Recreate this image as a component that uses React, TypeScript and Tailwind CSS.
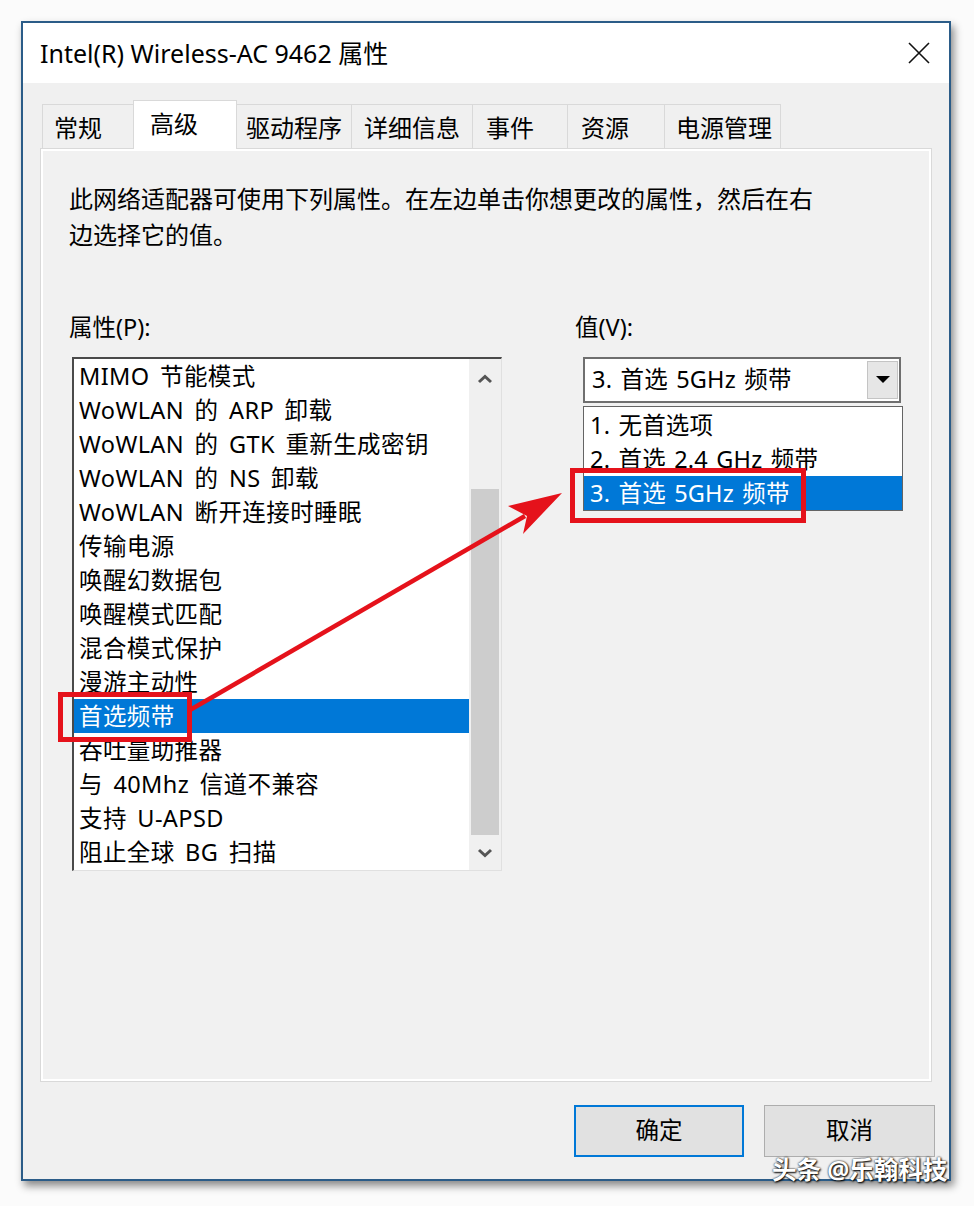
import React from "react";

const items = [
  "MIMO 节能模式",
  "WoWLAN 的 ARP 卸载",
  "WoWLAN 的 GTK 重新生成密钥",
  "WoWLAN 的 NS 卸载",
  "WoWLAN 断开连接时睡眠",
  "传输电源",
  "唤醒幻数据包",
  "唤醒模式匹配",
  "混合模式保护",
  "漫游主动性",
  "首选频带",
  "吞吐量助推器",
  "与 40Mhz 信道不兼容",
  "支持 U-APSD",
  "阻止全球 BG 扫描",
];

const tabs: { label: string; w: string; pl: string; active?: boolean }[] = [
  { label: "常规", w: "w-[92px]", pl: "pl-[11px]" },
  { label: "高级", w: "w-[104px]", pl: "pl-[16px]", active: true },
  { label: "驱动程序", w: "w-[116px]", pl: "pl-[9px]" },
  { label: "详细信息", w: "w-[122px]", pl: "pl-[12px]" },
  { label: "事件", w: "w-[96px]", pl: "pl-[13px]" },
  { label: "资源", w: "w-[98px]", pl: "pl-[13px]" },
  { label: "电源管理", w: "w-[117px]", pl: "pl-[11px]" },
];

const row = "h-[34px] leading-[34px] text-[23.5px] whitespace-nowrap tracking-[0.4px] [word-spacing:4px]";
const rowR = "h-[34px] leading-[34px] text-[23.5px] whitespace-nowrap tracking-[0.2px] [word-spacing:2px]";

export default function App() {
  return (
    <div className="w-[974px] h-[1206px] bg-[#fbfbfb] relative overflow-hidden font-['Noto_Sans','Noto_Sans_CJK_SC',sans-serif] text-[#111]">
      <div className="pt-[21px] pl-[21px]">
        <div className="w-[930px] h-[1160px] border-2 border-[#2b5c88] shadow-[3px_5px_8px_rgba(0,0,0,0.45)] flex flex-col bg-[#f0f0f0]">
          {/* title bar */}
          <div className="h-[60px] bg-white flex items-center justify-between pl-[17px] pr-[18px]">
            <span className="text-[25px] leading-none text-black">Intel(R) Wireless-AC 9462 属性</span>
            <svg width="24" height="24" viewBox="0 0 24 24">
              <path d="M2 2 L22 22 M22 2 L2 22" stroke="#111" strokeWidth="1.6" fill="none" />
            </svg>
          </div>

          {/* body */}
          <div className="flex-1 flex flex-col px-[17px]">
            {/* tabs */}
            <div className="mt-[17px] h-[48px] flex items-end pl-[2px] relative z-10">
              {tabs.map((t) =>
                t.active ? (
                  <div
                    key={t.label}
                    className={`${t.w} ${t.pl} h-[49px] -mb-px -ml-px bg-white border border-b-0 border-[#d9d9d9] text-[24px] leading-[46px] text-black`}
                  >
                    {t.label}
                  </div>
                ) : (
                  <div
                    key={t.label}
                    className={`${t.w} ${t.pl} h-[44px] -ml-px first:ml-0 bg-[#f0f0f0] border border-b-0 border-[#d9d9d9] text-[24px] leading-[46px] text-black`}
                  >
                    {t.label}
                  </div>
                )
              )}
            </div>

            {/* panel */}
            <div className="h-[934px] border border-[#d9d9d9] bg-[#f1f1f1] shadow-[inset_0_0_0_2px_#ffffff] pl-[28px] pt-[32px]">
              <div className="text-[24px] leading-[36px] text-black">
                <div>此网络适配器可使用下列属性。在左边单击你想更改的属性，然后在右</div>
                <div>边选择它的值。</div>
              </div>

              <div className="mt-[56px] flex">
                {/* left column */}
                <div className="w-[433px]">
                  <div className="text-[23.5px] leading-[36px] text-black">属性(P):</div>
                  <div className="mt-[12px] ml-[3px] w-[430px] h-[514px] flex border-t-2 border-l-2 border-r border-b border-t-[#4a4a4a] border-l-[#4a4a4a] border-r-[#e0e0e0] border-b-[#e0e0e0] bg-white">
                    <div className="flex-1 overflow-hidden">
                      {items.map((it, i) =>
                        i === 10 ? (
                          <div key={it} className={`${row} pl-[5px] bg-[#0078d7] text-white`}>
                            {it}
                          </div>
                        ) : (
                          <div key={it} className={`${row} pl-[5px] text-black`}>
                            {it}
                          </div>
                        )
                      )}
                    </div>
                    <div className="w-[32px] bg-[#f0f0f0] flex flex-col">
                      <div className="h-[40px] flex items-center justify-center">
                        <svg width="16" height="10" viewBox="0 0 16 10">
                          <path d="M2 8 L8 2.5 L14 8" stroke="#555" strokeWidth="3" fill="none" />
                        </svg>
                      </div>
                      <div className="flex-1" />
                      <div className="h-[346px] mx-[2px] bg-[#cdcdcd]" />
                      <div className="h-[35px] flex items-center justify-center">
                        <svg width="16" height="10" viewBox="0 0 16 10">
                          <path d="M2 2 L8 7.5 L14 2" stroke="#555" strokeWidth="3" fill="none" />
                        </svg>
                      </div>
                    </div>
                  </div>
                </div>

                {/* right column */}
                <div className="ml-[73px] relative">
                  <div className="text-[23.5px] leading-[36px] text-black">值(V):</div>
                  <div className="mt-[12px] ml-[8px] w-[318px] h-[46px] border-2 border-[#6f6f6f] bg-white flex items-center justify-between pl-[7px] pr-[1px]">
                    <span className="text-[23.5px] text-black whitespace-nowrap tracking-[0.2px] [word-spacing:2px]">3. 首选 5GHz 频带</span>
                    <div className="w-[31px] h-[38px] bg-[#e6e6e6] border border-[#c4c4c4] flex items-center justify-center">
                      <svg width="14" height="8" viewBox="0 0 14 8">
                        <path d="M0 0 L14 0 L7 7 Z" fill="#000" />
                      </svg>
                    </div>
                  </div>
                  {/* opened dropdown list (overlay) */}
                  <div className="absolute left-[8px] top-[97px] w-[320px] h-[105px] border border-[#646464] bg-white pt-[1px]">
                    <div className={`${rowR} pl-[6px] text-black`}>1. 无首选项</div>
                    <div className={`${rowR} pl-[6px] text-black`}>2. 首选 2.4 GHz 频带</div>
                    <div className={`${rowR} pl-[6px] bg-[#0078d7] text-white`}>3. 首选 5GHz 频带</div>
                  </div>
                </div>
              </div>
            </div>

            {/* buttons */}
            <div className="mt-[23px] -mr-[3px] flex justify-end gap-[20px]">
              <div className="w-[170px] h-[52px] bg-[#e1e1e1] border-2 border-[#0078d7] flex items-center justify-center text-[23.5px] text-black">
                确定
              </div>
              <div className="w-[171px] h-[52px] bg-[#e1e1e1] border border-[#adadad] flex items-center justify-center text-[23.5px] text-black">
                取消
              </div>
            </div>
          </div>
        </div>
      </div>

      {/* annotation overlay */}
      <svg className="absolute left-0 top-0 pointer-events-none" width="974" height="1206" viewBox="0 0 974 1206">
        <rect x="60.5" y="694.5" width="129" height="45" fill="none" stroke="#e5121b" strokeWidth="5" />
        <rect x="572.5" y="470.5" width="231" height="50" fill="none" stroke="#e5121b" strokeWidth="5" />
        <line x1="190" y1="710" x2="525" y2="516" stroke="#e5121b" strokeWidth="4.5" />
        <path d="M562 493 L523 534 L527 516 L508 506 Z" fill="#e5121b" />
      </svg>

      {/* watermark */}
      <div className="absolute left-[772px] top-[1154px] text-[24.5px] leading-[32px] font-bold text-white whitespace-nowrap [text-shadow:0_0_2px_#000,1px_1px_2px_#000]">
        头条 @乐翰科技
      </div>
    </div>
  );
}
